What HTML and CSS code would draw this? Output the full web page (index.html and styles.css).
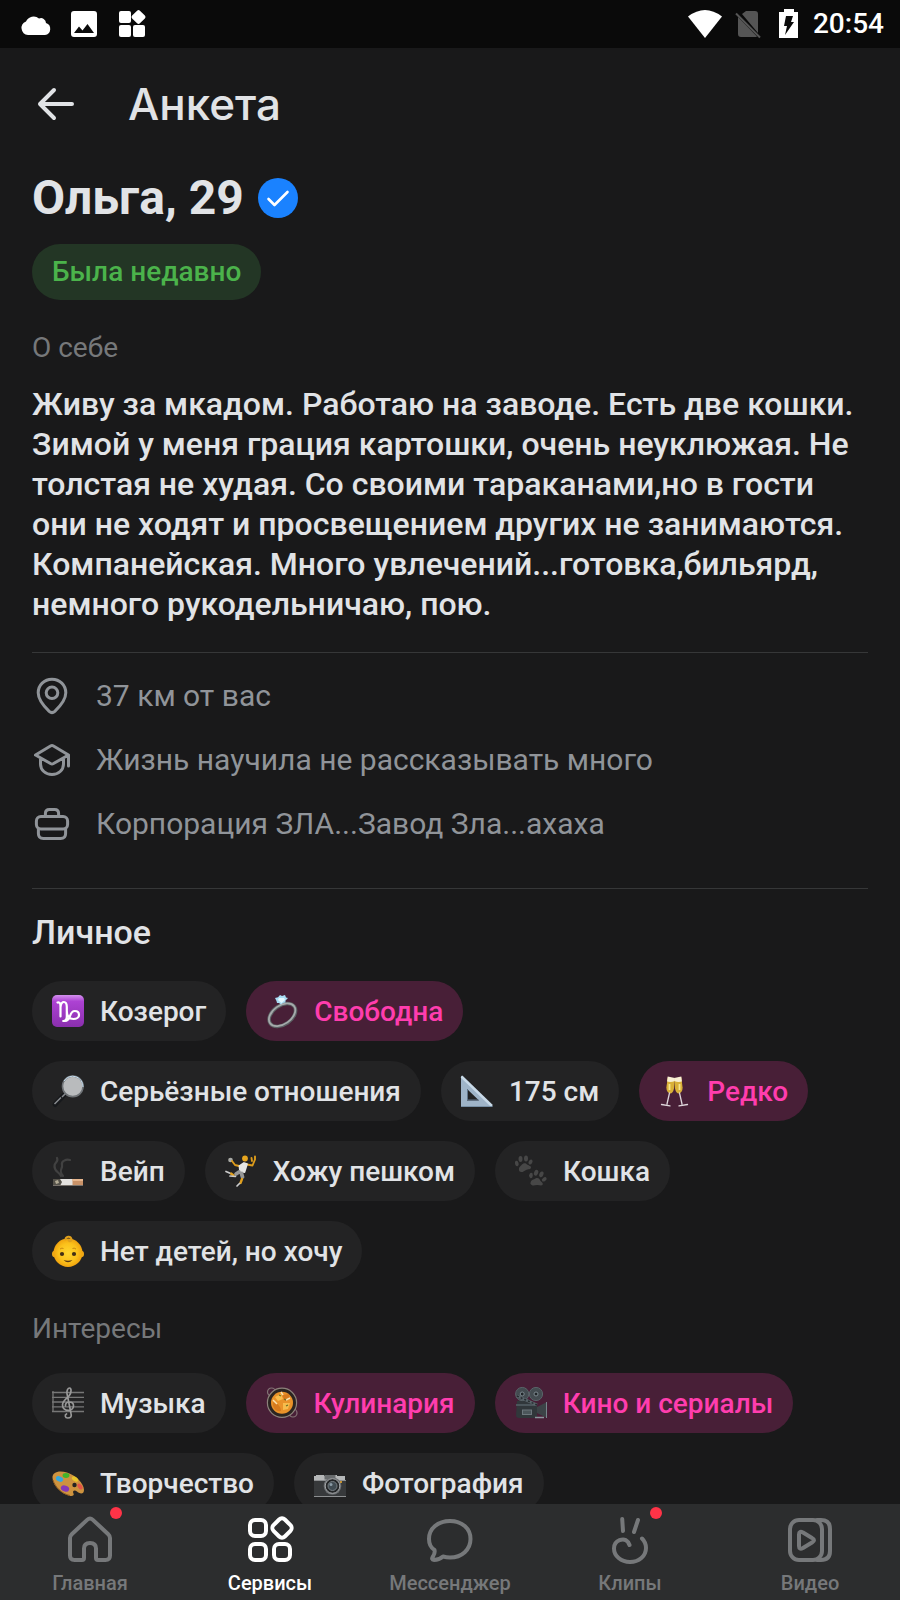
FILE: index.html
```html
<!DOCTYPE html>
<html lang="ru">
<head>
<meta charset="utf-8">
<meta name="viewport" content="width=device-width, initial-scale=1">
<title>Анкета</title>
<link rel="stylesheet" href="styles.css">
</head>
<body>
<div class="screen">
  <div class="status-bar">
    <div class="status-group status-left">
      <svg width="30" height="28" viewBox="0 0 30 28" fill="#fff"><path d="M8 25a7 7 0 0 1-2-13.500A8.500 8.500 0 0 1 19 8.500a5 5 0 0 1 7 4.500A6.200 6.200 0 0 1 25 25z"/></svg>
      <svg width="28" height="28" viewBox="0 0 28 28"><path fill="#fff" fill-rule="evenodd" d="M4 1h20a3 3 0 0 1 3 3v20a3 3 0 0 1-3 3H4a3 3 0 0 1-3-3V4a3 3 0 0 1 3-3zM4 23h20l-6.500-9-5 6.500-3.500-4z"/></svg>
      <svg width="28" height="28" viewBox="0 0 28 28" fill="#fff"><rect x="1" y="1" width="12" height="12" rx="2"/><rect x="1" y="15" width="12" height="12" rx="2"/><rect x="15" y="15" width="12" height="12" rx="2"/><rect x="15" y="1.500" width="11" height="11" rx="2" transform="rotate(45 20.500 7)"/></svg>
    </div>
    <div class="status-group status-right">
      <svg width="36" height="30" viewBox="0 0 36 30"><path fill="#fff" d="M1 7.500Q18-5.500 35 7.500L18 29z"/></svg>
      <svg width="36" height="30" viewBox="0 0 36 30"><path fill="#555" d="M9 5l4-3h9q3 0 3 3v19zM5 8l19 19.500q-1 .5-2 .5H8q-3 0-3-3z"/><path d="M3 4.500l24 24" stroke="#555" stroke-width="2"/></svg>
      <svg width="20" height="30" viewBox="0 0 20 30"><path fill="#fff" d="M5 0h10v3h4v26H0V3h5z"/><path fill="#0a0a0a" d="M7 7h7l-2 6h3L6 26l2-9H5z"/></svg>
      <time class="clock">20:54</time>
    </div>
  </div>

  <header class="app-bar">
    <button class="back" type="button" aria-label="Назад"><svg width="40" height="36" viewBox="0 0 40 36" fill="none" stroke="#e1e3e6" stroke-width="4" stroke-linecap="round" stroke-linejoin="round"><path d="M18 4L4 18l14 14M4 18h32"/></svg></button>
    <h1 class="title">Анкета</h1>
  </header>

  <main class="profile">
    <div class="name-row">
      <h2 class="name">Ольга, 29</h2>
      <svg width="40" height="40" viewBox="0 0 40 40" role="img" aria-label="Подтверждено"><circle cx="20" cy="20" r="20" fill="#1a82ff"/><path d="M10.500 21l6 6L29.500 14" fill="none" stroke="#fff" stroke-width="2.600" stroke-linecap="round" stroke-linejoin="round"/></svg>
    </div>
    <span class="seen">Была недавно</span>

    <h3 class="caption">О себе</h3>
    <p class="about">Живу за мкадом. Работаю на заводе. Есть две кошки. Зимой у меня грация картошки, очень неуклюжая. Не толстая не худая. Со своими тараканами,но в гости они не ходят и просвещением других не занимаются. Компанейская. Много увлечений...готовка,бильярд, немного рукодельничаю, пою.</p>

    <ul class="facts">
      <li class="fact"><svg width="40" height="40" viewBox="0 0 40 40"><path d="M20 3.200c-7.800 0-13.800 6-13.800 13.600 0 7.200 6 13.800 11 18.600q2.800 2.400 5.600 0c5-4.800 11-11.400 11-18.600C33.800 9.200 27.800 3.200 20 3.200z"/><circle cx="20" cy="16.800" r="5.800"/></svg>37 км от вас</li>
      <li class="fact"><svg width="40" height="40" viewBox="0 0 40 40"><path d="M3.500 15L18.500 6q1.500-.8 3 0L36.500 15 21.500 23.500q-1.500.8-3 0zM8.500 18v6c0 6 5 10.500 11.500 10.500S31.500 30 31.500 24v-6M36.500 15v11"/></svg>Жизнь научила не рассказывать много</li>
      <li class="fact"><svg width="40" height="40" viewBox="0 0 40 40"><rect x="4.400" y="12.400" width="31.200" height="12.600" rx="4.500"/><path d="M6.400 25v4.500q0 5 5 5h17.200q5 0 5-5V25M13.400 12V9.400q0-4 4-4h5.200q4 0 4 4V12"/></svg>Корпорация ЗЛА...Завод Зла...ахаха</li>
    </ul>

    <h3 class="section-title">Личное</h3>
    <ul class="chips">
      <li class="chip"><svg viewBox="0 0 32 32"><defs><linearGradient id="cap" x2="0" y2="1"><stop stop-color="#d391ee"/><stop offset=".2" stop-color="#ad42d3"/><stop offset="1" stop-color="#8a2fae"/></linearGradient></defs><rect width="32" height="32" rx="5" fill="url(#cap)"/><path d="M5.500 7.500c2.600-.8 3 1.500 3 4v10M8.500 12c.4-3 1.600-5 3.400-5 2.200 0 2.900 2 2.900 5v9.500c0 3-.8 4.500-3.600 4.500M14.800 16c0 5 2.600 8 6.700 8 3 0 5.500-1.500 5.500-4s-1.800-4-4.200-4c-3 0-4 2.500-4.800 5s-2.500 5-5 5" fill="none" stroke="#fff" stroke-width="2.200" stroke-linecap="round"/></svg>Козерог</li>
      <li class="chip chip-match"><svg viewBox="0 0 32 32"><g transform="rotate(-35 16.300 20)" fill="none"><ellipse cx="16.300" cy="20" rx="14.700" ry="9.500" stroke="#5b6063" stroke-width="3.600"/><ellipse cx="16.300" cy="19.700" rx="14.700" ry="9.300" stroke="#a6aaac" stroke-width="1.800"/></g><path d="M9 3l3-.8L14 0l2 1 3-1 1 2.500 2 .5-2.500 2.500v2L17 8l-2 1.500L13 8l-2 0-.5-2z" fill="#a9dcf4"/><path d="M13 3h5l1 2-3.500 3L12 5z" fill="#e4f8ff"/></svg>Свободна</li>
      <li class="chip"><svg viewBox="0 0 32 32"><path d="M11.500 20.500L3 29.500" stroke="#17191c" stroke-width="5" stroke-linecap="round"/><path d="M14 18l-4 4M9 22.500l-6.500 6.500" stroke="#888b8f" stroke-width="1.500"/><circle cx="20.800" cy="11.300" r="10.300" fill="#b9bbbd" stroke="#6f7377" stroke-width="1.600"/><path d="M12 6a10.300 10.300 0 0 1 19 6" fill="none" stroke="#c5def0" stroke-width="1"/></svg>Серьёзные отношения</li>
      <li class="chip"><svg viewBox="0 0 32 32"><path fill="#9fb4c8" fill-rule="evenodd" d="M0 .5L31.500 31.500H0zM6 14v11.500h12z"/><path d="M.5 1.500L31 31" stroke="#c8d9e8" stroke-width="2.500"/><path d="M6.500 14v11h11" fill="none" stroke="#61758a"/><path d="M0 31.500h31.500" stroke="#7890a6"/></svg>175 см</li>
      <li class="chip chip-match"><svg viewBox="0 0 32 32"><g id="glass"><path d="M8.700 2.500l7.100 1-.8 10q-1 5-4 5-3.500-1-3.600-6z" fill="#d9b038"/><path d="M8.700 1.500l7.200 1.500v3q-4 1.500-7.800.5z" fill="#f8f0d4"/><path d="M10.500 9v6" stroke="#f8e58d" stroke-width="1.800"/><path d="M10.500 18L8 29M2.500 29.500l8.500 1.300" fill="none" stroke="#ddd5da" stroke-width="1.300" stroke-linecap="round"/></g><use href="#glass" transform="matrix(-1 0 0 1 31 0)"/></svg>Редко</li>
      <li class="chip"><svg viewBox="0 0 32 32"><path d="M9 21c-2-4-7-5-6.500-10C2.500 7 7 7 5 3M11 21c-5-6 0-7-1-11s4-6 8-5" fill="none" stroke="#414141" stroke-width="2.200" stroke-linecap="round"/><rect x="1" y="24" width="30" height="7" rx="1" fill="#e4e2df"/><path d="M20.500 24H31v7H20.500z" fill="#c99268"/><path d="M20.500 24H31v2H20.500z" fill="#e7b68d"/><path d="M1 24h7l2 3-2 4H1z" fill="#55524a"/><path d="M3 26l3-1 1 3-3 1z" fill="#b3ac96"/><path d="M1 30.500h30" stroke="#77716b"/></svg>Вейп</li>
      <li class="chip"><svg viewBox="0 0 32 32" fill="none" stroke-linecap="round" stroke-linejoin="round"><circle cx="5.500" cy="5" r="2.300" fill="#a9aaa6"/><path d="M14 11l-4-1-3-4M22 9.500l5.500 1 2.500-6V1.500M27 6l-.5-3" stroke="#dc9b1b" stroke-width="1.900"/><circle cx="20" cy="3.500" r="2.900" fill="#e6a51e"/><path d="M14.500 11l4.500-3 3 1-2.500 8-4.500-1z" fill="#e6e6e4" stroke="#e6e6e4" stroke-width="1.800"/><path d="M14 17l-3 2M16.500 18.500l1 3.500" stroke="#969797" stroke-width="3.800"/><path d="M8.500 20.500L6 18.500M17 24l-1.500 4" stroke="#e1a01e" stroke-width="2.400"/><path d="M4.500 18L1 16.500M14.500 28.500l-2.500 2.500M10.500 21.500L5 21" stroke="#ccc" stroke-width="1.700"/></svg>Хожу пешком</li>
      <li class="chip"><svg viewBox="0 0 32 32" fill="#474747"><g id="paw"><path d="M4 15c-.5-3 2-4 3-5.500 2-2 4-1.500 5 0 1 1 4 1 4 3s-3 1.500-5 2.500-3 2.500-5 2-1.700-1-2-2z"/><ellipse cx="1.800" cy="8.500" rx="1.800" ry="2.800" transform="rotate(-15 1.800 8.500)"/><ellipse cx="5.500" cy="4" rx="2" ry="3"/><ellipse cx="11" cy="3.500" rx="2" ry="3"/><ellipse cx="15.500" cy="7" rx="1.800" ry="2.700" transform="rotate(30 15.500 7)"/></g><use href="#paw" transform="translate(17.500 12) rotate(22)"/></svg>Кошка</li>
      <li class="chip"><svg viewBox="0 0 32 32"><defs><radialGradient id="skin"><stop stop-color="#ffd62f"/><stop offset=".65" stop-color="#fbc11b"/><stop offset="1" stop-color="#f0a30f"/></radialGradient></defs><ellipse cx="3" cy="19" rx="3" ry="3.300" fill="#f0a917"/><ellipse cx="29" cy="19" rx="3" ry="3.300" fill="#f0a917"/><ellipse cx="16" cy="17.800" rx="14.500" ry="14.200" fill="url(#skin)"/><path d="M13.500 4.500c0-3 5-4 6-.5.700 2.500-3 3-3 1" fill="none" stroke="#e0a01c" stroke-width="1.900" stroke-linecap="round"/><circle cx="10" cy="19" r="2.100" fill="#443015"/><circle cx="22" cy="19" r="2.100" fill="#443015"/><path d="M8 14q2-1.500 3.500-.5M20.500 13.500Q22 12.500 24 14" fill="none" stroke="#c98a12"/><path d="M11.500 25q4.500 1.500 9 0-4.500 4.500-9 0z" fill="#583613"/></svg>Нет детей, но хочу</li>
    </ul>

    <h3 class="caption">Интересы</h3>
    <ul class="chips chips-interests">
      <li class="chip"><svg viewBox="0 0 32 32" fill="none" stroke="#777" stroke-width="1.300"><path d="M1 4v21M0 5.500h32M0 10.300h32M0 15h32M0 19.800h32M0 24.500h32"/><path d="M14.500 27c-2 1-1.500 4 1.200 4 3 0 4-1.500 3.400-4L15 6.500c-.5-3 1-5.500 2.500-5.500 2.200 0 2 5-.5 8-3 3-6.500 5-6.500 9 0 3.500 3 5.300 6 5.300S21.500 21 21.500 18.500 19.500 15 17 15s-3.800 2-3.500 4" stroke="#999" stroke-width="1.700" stroke-linecap="round"/></svg>Музыка</li>
      <li class="chip chip-match"><svg viewBox="0 0 32 32"><circle cx="5.500" cy="5" r="4" fill="none" stroke="#827274" stroke-width="1.200"/><circle cx="27" cy="26" r="4" fill="none" stroke="#827274" stroke-width="1.200"/><circle cx="16" cy="15.800" r="14.600" fill="#2b2521" stroke="#8d827b" stroke-width="1.200"/><circle cx="16" cy="15.800" r="11" fill="#e99229"/><path d="M7 15c-1 6 3 10 8 9 0-4-3-8-8-9zM16 8l7-1 1 5-5 2z" fill="#d67a1d"/><path d="M9 10l6-3 2 5-5 2zM17 16l7 0-2 6-5 1z" fill="#f7bc4c"/><path d="M15 5l2 3M7 13l4 4M20 13l4-2" stroke="#fae1ae" stroke-width="1.500"/><path d="M13 8l2 1M20 19l2-1M18 12l2 1" stroke="#657024" stroke-width="1.200"/></svg>Кулинария</li>
      <li class="chip chip-match"><svg viewBox="0 0 32 32"><path d="M22 20l10-5v16L22 26z" fill="#3c4347"/><path d="M31.500 15v16" stroke="#78848b"/><path d="M2 14l10-2 10 5v12q0 2-2 2H4q-3 0-3-3z" fill="#31373b"/><path d="M1 18h21" stroke="#4b555b" stroke-width="2"/><circle cx="7.200" cy="7" r="6.600" fill="#434b50" stroke="#596368"/><circle cx="21" cy="7" r="6.600" fill="#434b50" stroke="#596368"/><circle cx="7.200" cy="7" r="2" fill="#202528" stroke="#7d898f"/><circle cx="21" cy="7" r="2" fill="#202528" stroke="#7d898f"/><path d="M2 9l20 9" stroke="#59646a" stroke-width="3"/><path d="M2 9l20 9" stroke="#252b2e" stroke-width="1.500" stroke-dasharray="2 2"/><rect x="7.500" y="23" width="9" height="4.500" fill="#4c565b" stroke="#6d777d"/><path d="M20 30.500h9" stroke="#8b969d" stroke-width="1.500"/></svg>Кино и сериалы</li>
      <li class="chip"><svg viewBox="0 0 32 32"><path d="M.5 11C0 5 7 3 15 5.500S32 16 32 23c0 5-5 3.500-7 1.500-2.500-2-5-.5-3.500 2 1 2-1 3-4 2.300C10 27 1 19 .5 11z" fill="#ce933f"/><path d="M1 13c2 7 9 14 17 15.500" fill="none" stroke="#8f5b20"/><circle cx="22.500" cy="18" r="2.200" fill="#262321"/><ellipse cx="7.500" cy="12" rx="3.800" ry="2.500" fill="#35a8dd" transform="rotate(25 7.500 12)"/><ellipse cx="14" cy="8.500" rx="3.400" ry="2.400" fill="#42b429"/><ellipse cx="23" cy="12" rx="3.500" ry="2.200" fill="#e9c52c" transform="rotate(35 23 12)"/><ellipse cx="13" cy="21.500" rx="4.300" ry="3" fill="#8539b7" transform="rotate(20 13 21.500)"/><ellipse cx="28" cy="19.500" rx="2" ry="3.400" fill="#e25446" transform="rotate(-35 28 19.500)"/></svg>Творчество</li>
      <li class="chip"><svg viewBox="0 0 32 32"><path d="M2 8h8V9l4-1h9v1l8 0v6H0V9h2z" fill="#b5b7b8"/><path d="M0 13h32v15q0 2-2 2H2q-2 0-2-2z" fill="#37393b"/><path d="M0 13.500h32M0 29.500h32" stroke="#8d8f91"/><path d="M10.500 8h11v4.500h-11z" fill="#686b6d"/><circle cx="18.500" cy="19" r="8.800" fill="#6b6e71"/><circle cx="18.500" cy="19" r="7.300" fill="#242628" stroke="#a4a6a8"/><circle cx="18.500" cy="19" r="4.500" fill="#404b52" stroke="#767d82"/><circle cx="17" cy="17.500" r="1.500" fill="#8b9ca7"/><circle cx="27" cy="15" r="1" fill="#efac2f"/></svg>Фотография</li>
    </ul>
  </main>

  <nav class="tab-bar">
    <a class="tab" href="#home"><span class="tab-icon"><svg viewBox="0 0 56 56"><path d="M28 8.500q1.400 0 2.600 1.100L46 24q2 2 2 4v17.500q0 4.500-4.500 4.500H36q-2 0-2-2V38.500q0-5.500-6-5.500t-6 5.500V48q0 2-2 2h-7.500Q8 50 8 45.500V28q0-2 2-4L25.400 9.600Q26.600 8.500 28 8.500z"/></svg><i class="dot"></i></span>Главная</a>
    <a class="tab tab-active" href="#services" aria-current="page"><span class="tab-icon"><svg viewBox="0 0 56 56"><rect x="8" y="10" width="16" height="16" rx="5"/><rect x="8" y="34" width="16" height="16" rx="5"/><rect x="32" y="34" width="16" height="16" rx="5"/><rect x="32" y="10" width="16" height="16" rx="4" transform="rotate(45 40 18)"/></svg></span>Сервисы</a>
    <a class="tab" href="#messenger"><span class="tab-icon"><svg viewBox="0 0 56 56"><path d="M28 11c12 0 20.500 7.500 20.500 18S40 47.500 28 47.500q-3.500 0-7-1-4 3.500-9 3.500c-2 0-2.500-1.500-1-3.500 1.500-2.500 2-4.500 1.500-6.500Q7 36.500 7 29C7 18.500 16 11 28 11z"/></svg></span>Мессенджер</a>
    <a class="tab" href="#clips"><span class="tab-icon"><svg viewBox="0 0 56 56"><path d="M20.200 9l.8 12M36 10l-4 12M40 28.500c3 3 4 6 4 9.500C44 46 37 52 28 52S12 46 12 38.500C12 30 22 27 26 32l1.500 3"/></svg><i class="dot"></i></span>Клипы</a>
    <a class="tab" href="#video"><span class="tab-icon"><svg viewBox="0 0 56 56"><rect x="8" y="10" width="32" height="40" rx="9"/><path d="M35 10h4q9 0 9 9v22q0 9-9 9h-4M17 24.500q0-4 4-2l9 5.500q4 2 0 4.500l-9 5.500q-4 2-4-2z"/></svg></span>Видео</a>
  </nav>
</div>
</body>
</html>
```

FILE: styles.css
```css
* { box-sizing: border-box; margin: 0; padding: 0; }

body {
  background: #19191a;
  color: #e1e3e6;
  font-family: Roboto, "Noto Sans", sans-serif;
}

ul { list-style: none; }

svg { flex: none; display: block; overflow: visible; }

.screen {
  display: flex;
  flex-direction: column;
  height: 100vh;
}

.status-bar {
  display: flex;
  justify-content: space-between;
  align-items: center;
  flex: none;
  height: 48px;
  padding: 0 16px 0 20px;
  background: #0a0a0a;
}

.status-group { display: flex; align-items: center; }
.status-left { gap: 20px; }
.status-right { gap: 10px; }

.clock {
  margin-left: 4px;
  color: #fff;
  font-size: 28px;
  font-weight: 500;
  line-height: 32px;
}

.app-bar {
  display: flex;
  align-items: center;
  flex: none;
  gap: 52px;
  height: 112px;
  padding: 0 36px;
}

.back {
  border: 0;
  background: none;
  cursor: pointer;
}

.title {
  font-family: Inter, sans-serif;
  font-size: 44px;
  font-weight: 500;
  line-height: 52px;
}

.profile {
  flex: 1;
  min-height: 0;
  padding: 8px 32px 24px;
  overflow-y: auto;
  scrollbar-width: none;
}

.name-row { display: flex; align-items: center; gap: 14px; }

.name {
  font-size: 48px;
  font-weight: 700;
  line-height: 60px;
}

.seen {
  display: inline-block;
  margin-top: 16px;
  padding: 0 20px;
  border-radius: 28px;
  background: #233625;
  color: #4bb34b;
  font-size: 28px;
  font-weight: 500;
  line-height: 56px;
}

.caption {
  margin-top: 30px;
  color: #76787a;
  font-size: 28px;
  font-weight: 400;
  line-height: 36px;
}

.about {
  margin-top: 18px;
  font-size: 32px;
  font-weight: 500;
  line-height: 40px;
}

.facts {
  display: flex;
  flex-direction: column;
  gap: 24px;
  margin-top: 28px;
  padding: 23px 0 44px;
  border-top: 1px solid #363738;
  border-bottom: 1px solid #363738;
}

.fact {
  display: flex;
  align-items: center;
  gap: 24px;
  color: #909499;
  font-size: 30px;
  line-height: 40px;
}

.fact svg {
  fill: none;
  stroke: currentColor;
  stroke-width: 3;
  stroke-linecap: round;
  stroke-linejoin: round;
}

.section-title {
  margin-top: 23px;
  font-size: 34px;
  font-weight: 500;
  line-height: 40px;
}

.chips {
  display: flex;
  flex-wrap: wrap;
  gap: 20px;
  margin-top: 29px;
}

.chips-interests { margin-top: 26px; }

.chip {
  display: flex;
  align-items: center;
  gap: 16px;
  height: 60px;
  padding: 0 20px;
  border-radius: 30px;
  background: #232324;
  font-size: 28px;
  font-weight: 500;
  white-space: nowrap;
}

.chip svg { width: 32px; height: 32px; }

.chip-match { background: #481f37; color: #ff3dae; }

.tab-bar {
  display: flex;
  flex: none;
  height: 96px;
  background: #2c2d2e;
}

.tab {
  display: flex;
  flex: 1;
  flex-direction: column;
  align-items: center;
  padding-top: 6px;
  color: #76787a;
  font-size: 20px;
  font-weight: 500;
  line-height: 24px;
  text-decoration: none;
}

.tab-active { color: #fff; }

.tab-icon {
  position: relative;
  margin-bottom: 5px;
}

.tab-icon svg {
  width: 56px;
  height: 56px;
  fill: none;
  stroke: currentColor;
  stroke-width: 4;
  stroke-linecap: round;
  stroke-linejoin: round;
}

.dot {
  position: absolute;
  top: -3px;
  right: -4px;
  width: 12px;
  height: 12px;
  border-radius: 50%;
  background: #ff3347;
}
```
